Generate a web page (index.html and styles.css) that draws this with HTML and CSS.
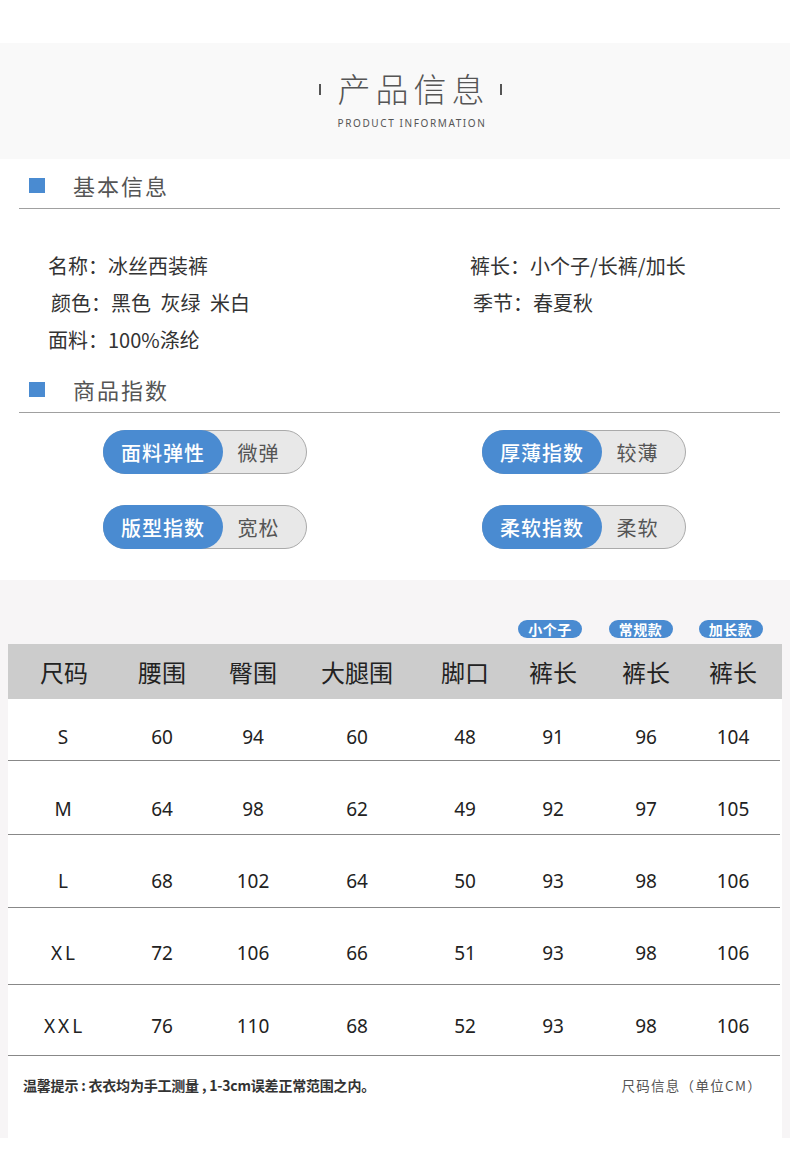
FILE: index.html
```html
<!DOCTYPE html>
<html lang="zh">
<head>
<meta charset="utf-8">
<link rel="stylesheet" href="styles.css">
</head>
<body>
<div class="top-space"></div>
<header class="hero">
  <h1 class="hero-title"><span class="bar"></span><span class="hero-text">产品信息</span><span class="bar"></span></h1>
  <div class="hero-sub">PRODUCT INFORMATION</div>
</header>

<section class="info">
  <div class="sec-head"><span class="sq"></span><span class="sec-title">基本信息</span></div>
  <div class="info-grid">
    <div class="info-col">
      <div class="info-item">名称：冰丝西装裤</div>
      <div class="info-item indent wide">颜色：黑色 灰绿 米白</div>
      <div class="info-item">面料：100%涤纶</div>
    </div>
    <div class="info-col">
      <div class="info-item">裤长：小个子/长裤/加长</div>
      <div class="info-item indent">季节：春夏秋</div>
    </div>
  </div>

  <div class="sec-head"><span class="sq"></span><span class="sec-title">商品指数</span></div>
  <div class="pills">
    <div class="pill"><span class="pill-key">面料弹性</span><span class="pill-val">微弹</span></div>
    <div class="pill"><span class="pill-key">厚薄指数</span><span class="pill-val">较薄</span></div>
    <div class="pill"><span class="pill-key">版型指数</span><span class="pill-val">宽松</span></div>
    <div class="pill"><span class="pill-key">柔软指数</span><span class="pill-val">柔软</span></div>
  </div>
</section>

<section class="sizes">
  <div class="badges tgrid">
    <span></span><span></span><span></span><span></span><span></span>
    <span class="badge">小个子</span><span class="badge">常规款</span><span class="badge">加长款</span>
  </div>
  <div class="card">
    <div class="thead tgrid">
      <span>尺码</span><span>腰围</span><span>臀围</span><span>大腿围</span><span>脚口</span><span>裤长</span><span>裤长</span><span>裤长</span>
    </div>
    <div class="trow r-s tgrid">
      <span class="sz">S</span><span>60</span><span>94</span><span>60</span><span>48</span><span>91</span><span>96</span><span>104</span>
    </div>
    <div class="trow r-m tgrid">
      <span class="sz">M</span><span>64</span><span>98</span><span>62</span><span>49</span><span>92</span><span>97</span><span>105</span>
    </div>
    <div class="trow r-l tgrid">
      <span class="sz">L</span><span>68</span><span>102</span><span>64</span><span>50</span><span>93</span><span>98</span><span>106</span>
    </div>
    <div class="trow r-xl tgrid">
      <span class="sz">XL</span><span>72</span><span>106</span><span>66</span><span>51</span><span>93</span><span>98</span><span>106</span>
    </div>
    <div class="trow r-xxl tgrid">
      <span class="sz">XXL</span><span>76</span><span>110</span><span>68</span><span>52</span><span>93</span><span>98</span><span>106</span>
    </div>
    <div class="foot">
      <span class="tip">温馨提示 : 衣衣均为手工测量 , 1-3cm误差正常范围之内。</span>
      <span class="unit">尺码信息（单位CM）</span>
    </div>
  </div>
</section>
<div class="bottom-space"></div>
</body>
</html>
```

FILE: styles.css
```css
* { box-sizing: border-box; }
html, body { margin: 0; padding: 0; background: #fff; }
body {
  width: 790px;
  font-family: "Noto Sans CJK SC", "Noto Sans", sans-serif;
  color: #333;
}
.top-space { height: 43px; }
.hero {
  height: 116px;
  background: #f9f9f9;
  display: flex;
  flex-direction: column;
  align-items: center;
  padding-left: 30px;
}
.hero-title {
  margin: 25px 0 0;
  height: 40px;
  display: flex;
  align-items: center;
  font-weight: 300;
  font-size: 33px;
  line-height: 40px;
  color: #555;
}
.hero-text { letter-spacing: 5px; margin-left: 17px; margin-right: 10px; }
.bar {
  display: block;
  width: 2px;
  height: 11px;
  background: #555;
  margin-top: 2px;
}
.hero-sub {
  margin-top: 9px;
  margin-left: 4px;
  font-family: "Noto Sans", sans-serif;
  font-size: 10px;
  line-height: 12px;
  letter-spacing: 1.6px;
  color: #555;
}

.info { padding: 0 10px 31px 19px; }
.sec-head {
  height: 50px;
  padding-top: 2px;
  display: flex;
  align-items: center;
  border-bottom: 1px solid #a0a0a0;
}
.sq {
  width: 16px;
  height: 15px;
  background: #4a8bd1;
  margin-left: 10px;
  margin-top: 2px;
}
.sec-title {
  margin-left: 28px;
  font-size: 22px;
  letter-spacing: 2px;
  color: #555;
}
.info-grid {
  display: grid;
  grid-template-columns: 422px 1fr;
  padding: 38px 0 5px 29px;
}
.info-item {
  height: 37px;
  line-height: 37px;
  font-size: 20px;
  color: #333;
}
.info-item.indent { padding-left: 3px; }
.info-item.wide { word-spacing: 5px; }

.pills {
  display: grid;
  grid-template-columns: 379px 1fr;
  row-gap: 31px;
  padding: 17px 0 0 84px;
}
.pill {
  width: 204px;
  height: 44px;
  display: flex;
  align-items: stretch;
  background: #e8e8e8;
  border: 1px solid #aaa;
  border-radius: 22px;
}
.pill-key {
  width: 120px;
  margin: -1px 0 -1px -1px;
  background: #4a8bd1;
  border-radius: 22px;
  color: #fff;
  font-size: 20px;
  font-weight: 500;
  letter-spacing: 1px;
  display: flex;
  align-items: center;
  justify-content: center;
}
.pill-val {
  flex: 1;
  display: flex;
  align-items: center;
  justify-content: center;
  font-size: 20px;
  color: #555;
  letter-spacing: 1px;
  padding-right: 12px;
}

.sizes {
  background: #f7f5f6;
  padding: 40px 8px 0;
}
.tgrid {
  display: grid;
  grid-template-columns: 112px 84px 98px 110px 106px 70px 116px 58px 1fr;
  justify-items: center;
  align-items: center;
}
.badges { height: 18px; margin-bottom: 6px; }
.badge {
  width: 64px;
  height: 18px;
  border-radius: 9px;
  background: #4a8bd1;
  color: #fff;
  font-size: 14px;
  font-weight: 700;
  line-height: 18px;
  text-align: center;
  letter-spacing: 0.5px;
}
.badges .badge:nth-child(6) { margin-left: -6px; }
.badges .badge:nth-child(7) { margin-left: -11px; }
.badges .badge:nth-child(8) { margin-left: -5px; }
.card { background: #fff; height: 494px; }
.thead {
  height: 55px;
  background: #ccc;
  font-size: 24px;
  color: #222;
}
.trow {
  margin: 0 2px 0 0;
  border-bottom: 1px solid #888;
  font-family: "Noto Sans", sans-serif;
  font-size: 19px;
  color: #222;
}
.r-s { height: 62px; padding-top: 14px; }
.r-m { height: 74px; padding-top: 22px; }
.r-l { height: 73px; padding-top: 19px; }
.r-xl { height: 77px; padding-top: 13px; }
.r-xxl { height: 71px; padding-top: 11px; }
.trow > span:first-child { margin-left: -2px; }
.sz { letter-spacing: 3px; padding-left: 3px; }
.foot {
  display: flex;
  justify-content: space-between;
  align-items: center;
  padding: 19px 20px 0 15px;
}
.tip {
  font-size: 14px;
  font-weight: 700;
  color: #333;
  letter-spacing: -0.2px;
}
.unit {
  font-size: 13.5px;
  color: #555;
  letter-spacing: 1.3px;
}
.bottom-space { height: 27px; }
```
